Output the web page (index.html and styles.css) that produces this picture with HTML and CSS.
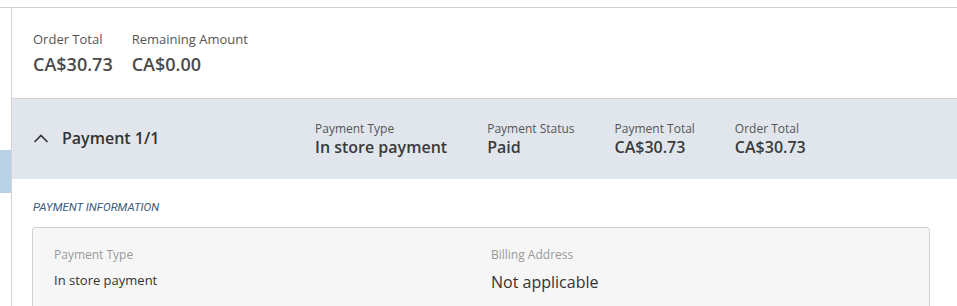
FILE: index.html
```html
<!DOCTYPE html>
<html lang="en">
<head>
    <meta charset="UTF-8">
    <meta name="viewport" content="width=device-width, initial-scale=1.0">
    <title>Order Payments</title>
    <link rel="stylesheet" href="styles.css">
</head>
<body>
    <div class="page">
        <div class="gutter">
            <div class="gutter-marker"></div>
        </div>

        <div class="main">
            <div class="totals">
                <div class="total-item">
                    <div class="total-label">Order Total</div>
                    <div class="total-value">CA$30.73</div>
                </div>
                <div class="total-item">
                    <div class="total-label">Remaining Amount</div>
                    <div class="total-value">CA$0.00</div>
                </div>
            </div>

            <div class="payment-header">
                <div class="payment-title">
                    <svg class="chevron" width="16" height="10" viewBox="0 0 16 10">
                        <polyline points="1.5,9 8,2.5 14.5,9" fill="none" stroke="#333" stroke-width="1.7"/>
                    </svg>
                    <span>Payment 1/1</span>
                </div>
                <div class="summary-item">
                    <div class="summary-label">Payment Type</div>
                    <div class="summary-value">In store payment</div>
                </div>
                <div class="summary-item">
                    <div class="summary-label">Payment Status</div>
                    <div class="summary-value">Paid</div>
                </div>
                <div class="summary-item">
                    <div class="summary-label">Payment Total</div>
                    <div class="summary-value">CA$30.73</div>
                </div>
                <div class="summary-item">
                    <div class="summary-label">Order Total</div>
                    <div class="summary-value">CA$30.73</div>
                </div>
            </div>

            <div class="payment-body">
                <h3 class="section-title">Payment Information</h3>
                <div class="info-box">
                    <div class="info-field">
                        <div class="info-label">Payment Type</div>
                        <div class="info-value small">In store payment</div>
                    </div>
                    <div class="info-field">
                        <div class="info-label">Billing Address</div>
                        <div class="info-value">Not applicable</div>
                    </div>
                </div>
            </div>
        </div>
    </div>
</body>
</html>
```

FILE: styles.css
```css
:root {
    --border-color: #d2d2d2;
    --band-bg: #e1e6ed;
    --text-dark: #333333;
    --text-mid: #555555;
    --text-light: #9a9a9a;
}

body {
    margin: 0;
    font-family: 'Open Sans', 'Noto Sans', sans-serif;
    color: var(--text-dark);
    background-color: #ffffff;
}

.page {
    display: flex;
    margin-top: 7px;
    border-top: 1px solid var(--border-color);
    min-height: 298px;
}

.gutter {
    width: 11px;
    flex-shrink: 0;
    border-right: 1px solid var(--border-color);
    padding-top: 142px;
}

.gutter-marker {
    height: 43px;
    background-color: #b9d1e5;
}

.main {
    flex: 1;
}

.totals {
    display: flex;
    gap: 19px;
    padding: 22px 21px 22px;
    border-bottom: 1px solid var(--border-color);
}

.total-label {
    font-size: 13px;
    line-height: 18px;
    color: var(--text-mid);
}

.total-value {
    font-size: 18px;
    line-height: 24px;
    font-weight: 600;
    color: #4a4a4a;
    margin-top: 4px;
}

.payment-header {
    display: flex;
    align-items: center;
    gap: 40px;
    height: 80px;
    padding: 0 21px;
    background-color: var(--band-bg);
}

.payment-title {
    display: flex;
    align-items: center;
    gap: 13px;
    width: 242px;
    font-size: 16px;
    font-weight: 600;
    color: var(--text-dark);
    padding-bottom: 2px;
}

.chevron {
    display: block;
}

.summary-label {
    font-size: 12px;
    line-height: 16px;
    color: var(--text-mid);
}

.summary-value {
    font-size: 16px;
    line-height: 20px;
    font-weight: 600;
    color: #3a3a3a;
}

.payment-body {
    padding: 20px 27px 0 20px;
}

.section-title {
    margin: 0 0 12px 1px;
    font-family: 'Roboto', sans-serif;
    font-size: 11.5px;
    font-style: italic;
    font-weight: 400;
    text-transform: uppercase;
    color: #3b5a7d;
    line-height: 16px;
}

.info-box {
    display: grid;
    grid-template-columns: 1fr 1fr;
    gap: 20px;
    padding: 19px 21px 20px;
    background-color: #f6f6f6;
    border: 1px solid var(--border-color);
    border-radius: 3px;
}

.info-label {
    font-size: 12px;
    line-height: 16px;
    color: var(--text-light);
    margin-bottom: 8px;
}

.info-value {
    font-size: 16px;
    line-height: 22px;
    color: var(--text-dark);
}

.info-value.small {
    font-size: 13px;
    line-height: 18px;
}
```
